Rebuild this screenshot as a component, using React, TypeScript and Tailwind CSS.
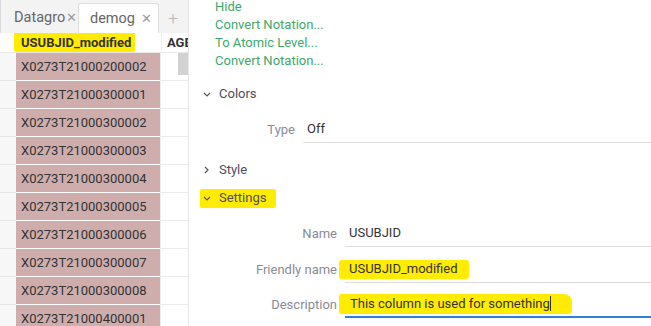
const rows = [
  'X0273T21000200002',
  'X0273T21000300001',
  'X0273T21000300002',
  'X0273T21000300003',
  'X0273T21000300004',
  'X0273T21000300005',
  'X0273T21000300006',
  'X0273T21000300007',
  'X0273T21000300008',
  'X0273T21000400001',
];

const menu = ['Hide', 'Convert Notation...', 'To Atomic Level...', 'Convert Notation...'];

function ChevronDown() {
  return (
    <svg width="8" height="5" viewBox="0 0 8 5" className="shrink-0">
      <path d="M1 1l3 3 3-3" fill="none" stroke="#555" strokeWidth="1.2" />
    </svg>
  );
}

function ChevronRight() {
  return (
    <svg width="5" height="8" viewBox="0 0 5 8" className="shrink-0">
      <path d="M1 1l3 3-3 3" fill="none" stroke="#555" strokeWidth="1.2" />
    </svg>
  );
}

export default function App() {
  return (
    <div className="flex w-[651px] h-[326px] overflow-hidden bg-white text-[13px] font-['Roboto',sans-serif]">
      {/* Grid */}
      <div className="w-[189px] shrink-0 flex flex-col border-r border-[#e8e8e8]">
        {/* Tabs */}
        <div className="h-[33px] shrink-0 flex items-end bg-[#f3f3f3] border-l border-[#dcdcdc]">
          <div className="h-[30px] w-[77px] shrink-0 flex items-center pl-[13px] text-[#666] text-[14.5px]">
            <span>Datagro</span>
            <span className="ml-[1px] text-[#9a9a9a] text-[13px]">✕</span>
          </div>
          <div className="h-[30px] w-[81px] shrink-0 flex items-center justify-between pl-[11px] pr-[6px] bg-white border border-b-0 border-[#dedede] rounded-t-[3px] text-[#666] text-[14.5px]">
            <span>demog</span>
            <span className="text-[#9a9a9a] text-[13px]">✕</span>
          </div>
          <div className="h-[30px] flex items-center pl-[9px] text-[#b9b9b9] text-[18px] font-light">+</div>
        </div>

        {/* Header */}
        <div className="relative flex h-[20px] shrink-0 border-b border-[#e8e8e8] font-bold text-[#333]">
          <div className="w-[14px] shrink-0" />
          <div className="w-[147px] shrink-0 flex items-center">
            <span className="bg-[#ffec00] h-[19px] flex items-center pl-[7px] pr-[4px] rounded-b-[2px] leading-none">USUBJID_modified</span>
          </div>
          <div className="flex-1 flex items-center pl-[5px] overflow-hidden border-l border-[#eee]">AGE</div>
        </div>

        {/* Rows */}
        <div className="relative flex-1 overflow-hidden">
          {rows.map((r) => (
            <div key={r} className="flex h-[28px] shrink-0">
              <div className="w-[16px] shrink-0 bg-[#f7f7f7] border-b border-[#e6e6e6]" />
              <div className="w-[144px] shrink-0 bg-[#cfadad] border-b border-white flex items-center pl-[5px] text-[#333]">
                {r}
              </div>
              <div className="flex-1 border-b border-l border-[#ececec]" />
            </div>
          ))}
          <div className="absolute right-0 top-[-3px] w-[10px] h-[25px] bg-[#d2d2d2]" />
        </div>
      </div>

      {/* Property panel */}
      <div className="flex-1 flex flex-col">
        <div className="mt-[-2px] pl-[26px] flex flex-col text-[#3ea86c]">
          {menu.map((m, i) => (
            <div key={i} className="h-[18px] leading-[18px]">{m}</div>
          ))}
        </div>

        <div className="mt-[14px] h-[20px] flex items-center pl-[14px] gap-[8px] text-[#4d4d5e]">
          <ChevronDown />
          <span>Colors</span>
        </div>

        <div className="mt-[12px] flex items-center h-[27px]">
          <div className="w-[106px] text-right text-[#8b8b96]">Type</div>
          <div className="flex-1 ml-[8px] h-[27px] border-b border-[#dcdcdc] flex items-center pl-[4px] text-[#333]">Off</div>
        </div>

        <div className="mt-[17px] h-[20px] flex items-center pl-[15px] gap-[10px] text-[#4d4d5e]">
          <ChevronRight />
          <span>Style</span>
        </div>

        <div className="mt-[8px] h-[20px] flex items-center">
          <div className="ml-[11px] h-[19px] w-[76px] flex items-center pl-[3px] gap-[8px] bg-[#ffec00] rounded-[2px] text-[#4d4d5e]">
            <ChevronDown />
            <span>Settings</span>
          </div>
        </div>

        <div className="mt-[12px] flex items-center h-[27px]">
          <div className="w-[148px] text-right text-[#8b8b96]">Name</div>
          <div className="flex-1 ml-[8px] h-[27px] border-b border-[#dcdcdc] flex items-center pl-[4px] text-[#333]">USUBJID</div>
        </div>

        <div className="mt-[9px] flex items-center h-[27px]">
          <div className="w-[148px] text-right text-[#8b8b96]">Friendly name</div>
          <div className="flex-1 ml-[8px] h-[27px] border-b border-[#dcdcdc] flex items-center text-[#333]">
            <span className="-ml-[6px] bg-[#ffec00] h-[19px] flex items-center pl-[10px] pr-[11px] rounded-[3px]">USUBJID_modified</span>
          </div>
        </div>

        <div className="mt-[8px] flex items-center h-[27px]">
          <div className="w-[148px] text-right text-[#8b8b96]">Description</div>
          <div className="flex-1 ml-[8px] h-[27px] border-b-2 border-[#2d7fd8] flex items-center text-[#333]">
            <span className="-ml-[6px] bg-[#ffec00] h-[20px] flex items-center pl-[11px] pr-[21px] rounded-[3px] rounded-tr-[8px]">
              This column is used for something<span className="inline-block w-[1px] h-[15px] bg-[#333]" />
            </span>
          </div>
        </div>
      </div>
    </div>
  );
}
